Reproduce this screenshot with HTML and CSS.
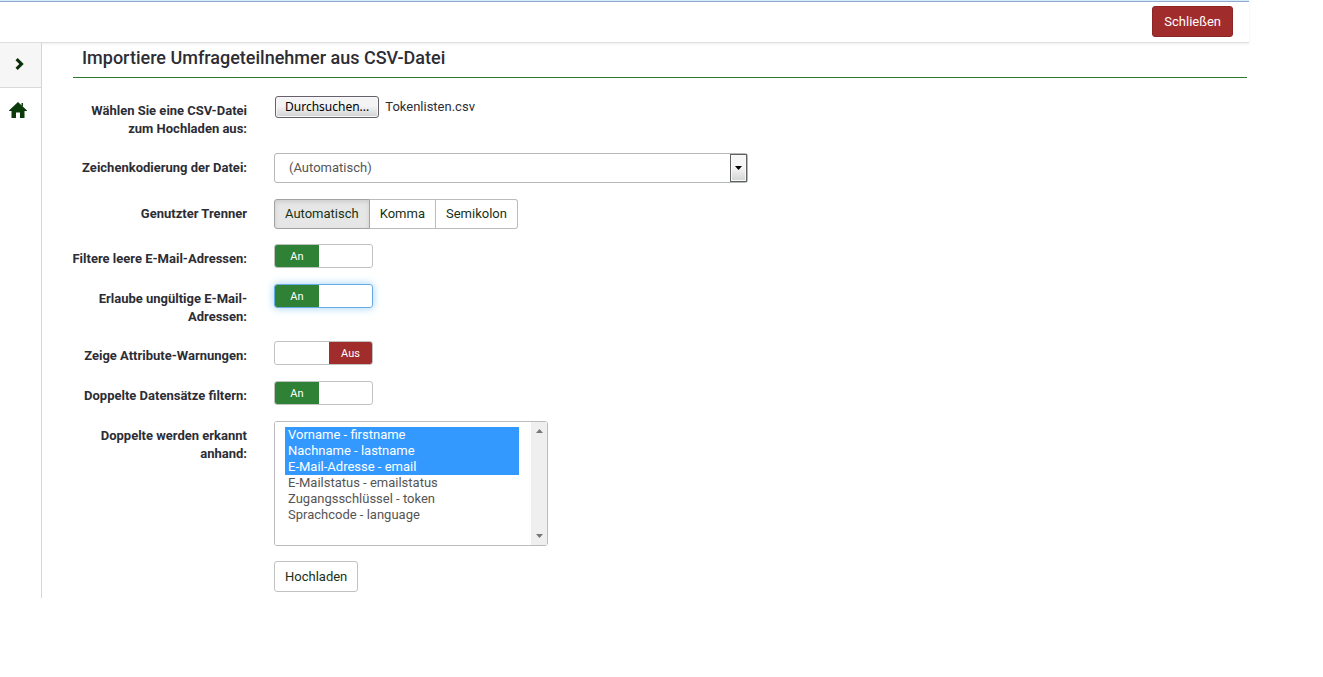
FILE: index.html
```html
<!DOCTYPE html>
<html lang="de">
<head>
<meta charset="utf-8">
<meta name="viewport" content="width=device-width, initial-scale=1">
<title>Importiere Umfrageteilnehmer aus CSV-Datei</title>
<link rel="stylesheet" href="styles.css">
</head>
<body>
<div class="page">
  <header class="topbar">
    <button type="button" class="close-button">Schließen</button>
  </header>
  <div class="columns">
    <nav class="sidebar" aria-label="Seitenmenü">
      <button type="button" class="side-toggle" aria-label="Menü öffnen">
        <svg width="10" height="12" viewBox="0 0 10 12"><path d="M0.500 2.200 2.700 0 8.700 6 2.700 12 0.500 9.800 4.300 6z" fill="#0b2f0b"/></svg>
      </button>
      <a href="#" class="side-home" aria-label="Startseite">
        <svg width="18" height="16" viewBox="0 0 18 16"><path d="M9 0 18 8.500V9h-2.500v7H11v-5.500H7V16H2.500V9H0v-.5zM12.500 1H14v3.500l-1.500-1.500z" fill="#0b3a0b"/></svg>
      </a>
    </nav>
    <main class="content">
      <h1 class="title">Importiere Umfrageteilnehmer aus CSV-Datei</h1>
      <form class="form">
        <div class="row">
          <label class="label" for="file">Wählen Sie eine CSV-Datei zum Hochladen aus:</label>
          <div class="file">
            <input class="hidden-input" type="file" id="file" accept=".csv">
            <label class="file-button" for="file">Durchsuchen...</label>
            <span class="file-name">Tokenlisten.csv</span>
          </div>
        </div>
        <div class="row">
          <label class="label" for="charset">Zeichenkodierung der Datei:</label>
          <div class="dropdown">
            <select class="dropdown-select" id="charset"><option>(Automatisch)</option></select>
            <span class="dropdown-arrow"><svg width="7" height="4" viewBox="0 0 7 4"><path d="M0 0h7L3.500 4z" fill="#000"/></svg></span>
          </div>
        </div>
        <div class="row" role="radiogroup" aria-labelledby="separator">
          <span class="label" id="separator">Genutzter Trenner</span>
          <div class="group">
            <label class="group-item"><input class="hidden-input" type="radio" name="separator" checked>Automatisch</label>
            <label class="group-item"><input class="hidden-input" type="radio" name="separator">Komma</label>
            <label class="group-item"><input class="hidden-input" type="radio" name="separator">Semikolon</label>
          </div>
        </div>
        <div class="row">
          <label class="label" for="blank">Filtere leere E-Mail-Adressen:</label>
          <label class="switch"><input class="hidden-input" type="checkbox" id="blank" checked><span class="on">An</span><span class="off">Aus</span></label>
        </div>
        <div class="row">
          <label class="label" for="invalid">Erlaube ungültige E-Mail-Adressen:</label>
          <label class="switch focused"><input class="hidden-input" type="checkbox" id="invalid" checked><span class="on">An</span><span class="off">Aus</span></label>
        </div>
        <div class="row">
          <label class="label" for="warnings">Zeige Attribute-Warnungen:</label>
          <label class="switch"><input class="hidden-input" type="checkbox" id="warnings"><span class="on">An</span><span class="off">Aus</span></label>
        </div>
        <div class="row">
          <label class="label" for="duplicates">Doppelte Datensätze filtern:</label>
          <label class="switch"><input class="hidden-input" type="checkbox" id="duplicates" checked><span class="on">An</span><span class="off">Aus</span></label>
        </div>
        <div class="row">
          <label class="label" for="fields">Doppelte werden erkannt anhand:</label>
          <div class="listbox">
            <select class="list" id="fields" multiple size="7">
              <option selected>Vorname - firstname</option>
              <option selected>Nachname - lastname</option>
              <option selected>E-Mail-Adresse - email</option>
              <option>E-Mailstatus - emailstatus</option>
              <option>Zugangsschlüssel - token</option>
              <option>Sprachcode - language</option>
            </select>
            <span class="scrollbar" aria-hidden="true">
              <svg width="7" height="4" viewBox="0 0 7 4"><path d="M0 4h7L3.500 0z" fill="#777"/></svg>
              <svg width="7" height="4" viewBox="0 0 7 4"><path d="M0 0h7L3.500 4z" fill="#777"/></svg>
            </span>
          </div>
        </div>
        <div class="row">
          <span></span>
          <button type="submit" class="upload">Hochladen</button>
        </div>
      </form>
    </main>
  </div>
</div>
</body>
</html>
```
FILE: styles.css
```css
* { box-sizing: border-box; }

body {
  margin: 0;
  background: #fff;
  color: #2d2d35;
  font: 13px/18px Roboto, "Liberation Sans", sans-serif;
}

button, select { font: inherit; }

.page { margin-right: 74px; }

.topbar {
  display: flex;
  justify-content: flex-end;
  padding: 5px 16px;
  border-top: 1px solid #d3ecf8;
  border-bottom: 1px solid #dcdfe0;
  box-shadow: inset 0 1px #93a9d0, 0 1px 3px #eee;
}

.close-button {
  height: 31px;
  padding: 0 11px;
  border: 1px solid #8c2626;
  border-radius: 3px;
  background: #a02c2c;
  color: #fff;
}

.columns { display: flex; }

.sidebar {
  width: 42px;
  min-height: 555px;
  border-right: 1px solid #d3d6d6;
}

.side-toggle {
  display: flex;
  align-items: center;
  justify-content: center;
  width: 100%;
  height: 45px;
  padding: 0 2px 2px 0;
  border: 0;
  border-bottom: 1px solid #d6dada;
  background: #f6f6f6;
}

.side-home {
  display: flex;
  justify-content: center;
  padding: 14px 5px 0 0;
}

.content {
  flex: 1;
  padding: 0 2px 0 27px;
}

.title {
  margin: 0 0 18px 4px;
  padding: 4px 9px 8px;
  border-bottom: 1px solid #2b7a34;
  font-size: 18px;
  line-height: 22px;
  font-weight: 500;
}

.form {
  display: grid;
  gap: 15px;
}

.row {
  display: grid;
  grid-template-columns: 178px minmax(0, 474px);
  column-gap: 27px;
  align-items: start;
  justify-items: start;
  min-height: 25px;
}

.label {
  justify-self: end;
  padding-top: 6px;
  font-weight: 700;
  text-align: right;
}

.hidden-input {
  position: absolute;
  width: 1px;
  height: 1px;
  opacity: 0;
}

.file {
  display: flex;
  align-items: center;
  gap: 6px;
  padding-left: 1px;
}

.file-button {
  padding: 0 9px;
  border: 1px solid #66606c;
  border-radius: 3px;
  background: linear-gradient(#f4f4f4 45%, #d2d2d2);
  box-shadow: inset 0 0 0 1px #f8f8f8;
  color: #000;
  font: 12px/20px "Noto Sans", sans-serif;
}

.dropdown {
  position: relative;
  width: 100%;
  padding-bottom: 1px;
}

.dropdown-select {
  display: block;
  width: 100%;
  height: 30px;
  padding: 0 28px 0 14px;
  border: 1px solid #b4b8b6;
  border-radius: 3px;
  appearance: none;
  background: #fff;
  color: #555;
}

.dropdown-arrow {
  position: absolute;
  top: 1px;
  right: 1px;
  display: flex;
  align-items: center;
  justify-content: center;
  width: 17px;
  height: 28px;
  border: 1px solid #606064;
  background: linear-gradient(#f6f6f6 45%, #d2d5d3);
  box-shadow: inset 0 0 0 1px #fafafa;
  pointer-events: none;
}

.group { display: flex; }

.group-item {
  padding: 5px 10px;
  border: 1px solid #b9beba;
  color: #173217;
}

.group-item + .group-item { border-left: 0; }
.group-item:first-child { border-radius: 3px 0 0 3px; }
.group-item:last-child { border-radius: 0 3px 3px 0; }

.group-item:has(:checked) {
  border-color: #a0a4a1;
  background: #e5e6e5;
  box-shadow: inset 0 2px 4px #ccc;
}

.switch {
  display: flex;
  width: 99px;
  height: 24px;
  overflow: hidden;
  border: 1px solid #bfc3c0;
  border-radius: 3px;
  color: #fff;
  font-size: 11px;
  line-height: 24px;
  text-align: center;
}

.switch.focused {
  border-color: #66aae6;
  box-shadow: 0 0 8px #9ed0f4;
}

.on {
  width: 44px;
  background: #2f8235;
}

.off {
  display: none;
  width: 43px;
  margin-left: auto;
  background: #a02c2c;
}

.switch :not(:checked) ~ .on { display: none; }
.switch :not(:checked) ~ .off { display: block; }
.switch :checked ~ .off { display: none; }
.switch :checked ~ .on { display: block; }

.listbox {
  display: flex;
  width: 274px;
  height: 125px;
  border: 1px solid #bdb9bf;
  border-radius: 3px;
}

.list {
  flex: 1;
  padding: 5px 12px 5px 10px;
  border: 0;
  outline: 0;
  overflow: hidden;
  background: #fff;
  color: #555;
}

.list option {
  height: 16px;
  min-height: 16px;
  padding: 0 3px;
  line-height: 16px;
}

.list option:checked {
  background: linear-gradient(#3399ff, #3399ff);
  color: #fff;
}

.scrollbar {
  display: flex;
  flex-direction: column;
  align-items: center;
  justify-content: space-between;
  width: 16px;
  padding: 7px 0;
  background: #efefef;
}

.upload {
  height: 31px;
  padding: 0 10px;
  border: 1px solid #bfc3c0;
  border-radius: 3px;
  background: #fff;
  color: #173217;
}
```
